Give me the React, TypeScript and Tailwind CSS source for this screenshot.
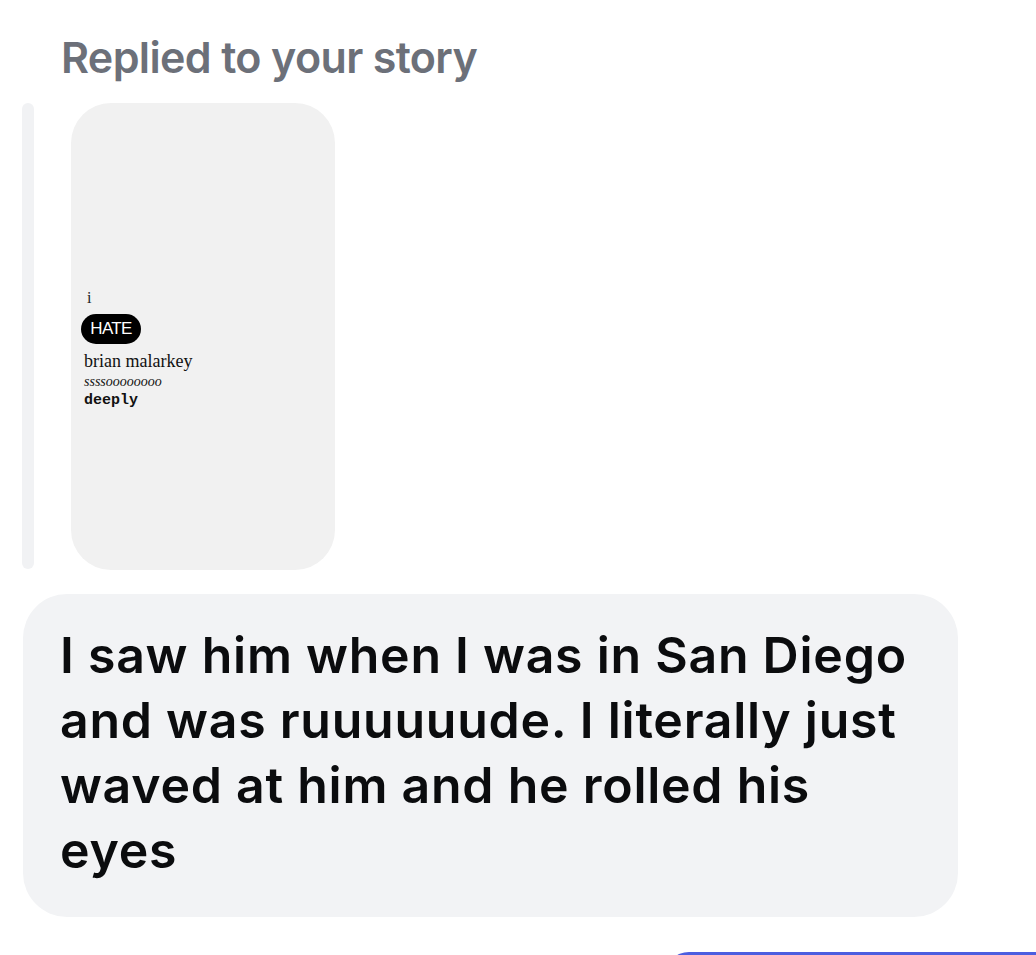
import React from "react";

export default function App() {
  return (
    <div className="w-[1036px] h-[955px] overflow-hidden bg-white flex flex-col">
      <div className="mt-[36px] pl-[61px] text-[43px] leading-none font-semibold text-[#6c7079] tracking-[-0.015em] font-['Inter','Noto_Sans',sans-serif]">
        Replied to your story
      </div>

      <div className="mt-[24px] flex items-start">
        <div className="ml-[22px] w-[12px] h-[466px] rounded-full bg-[#f1f2f4]" />
        <div className="ml-[37px] w-[264px] h-[467px] rounded-[40px] bg-[#f1f1f1] flex flex-col items-start pl-[10px] pt-[185px]">
          <div className="ml-[6px] text-[16px] leading-[20px] text-[#222] font-['Liberation_Serif',serif]">
            i
          </div>
          <div className="mt-[6px] h-[30px] w-[60px] rounded-full bg-black text-white flex items-center justify-center text-[17px] tracking-[-0.04em] font-['Liberation_Sans',Arial,sans-serif]">
            HATE
          </div>
          <div className="mt-[6px] ml-[3px] text-[18px] leading-[22px] text-[#111] font-['Liberation_Serif',serif]">
            brian malarkey
          </div>
          <div className="mt-[1px] ml-[3px] text-[14px] leading-[18px] italic text-[#111] font-['Liberation_Serif',serif]">
            ssssoooooooo
          </div>
          <div className="mt-[1px] ml-[3px] text-[15px] leading-[18px] font-bold text-[#111] font-['Liberation_Mono',monospace]">
            deeply
          </div>
        </div>
      </div>

      <div className="mt-[24px] ml-[23px] w-[935px] rounded-[44px] bg-[#f2f3f5] pl-[37px] pr-[30px] pt-[29px] pb-[34px] text-[50px] leading-[65px] font-semibold text-[#0b0c0e] tracking-[0.015em] font-['Inter','Noto_Sans',sans-serif]">
        I saw him when I was in San Diego and was ruuuuuude. I literally just waved at him and he rolled his eyes
      </div>

      <div className="mt-[35px] ml-[665px] h-[80px] shrink-0 w-[371px] rounded-tl-[24px] bg-[#4c5ee0]" />
    </div>
  );
}
